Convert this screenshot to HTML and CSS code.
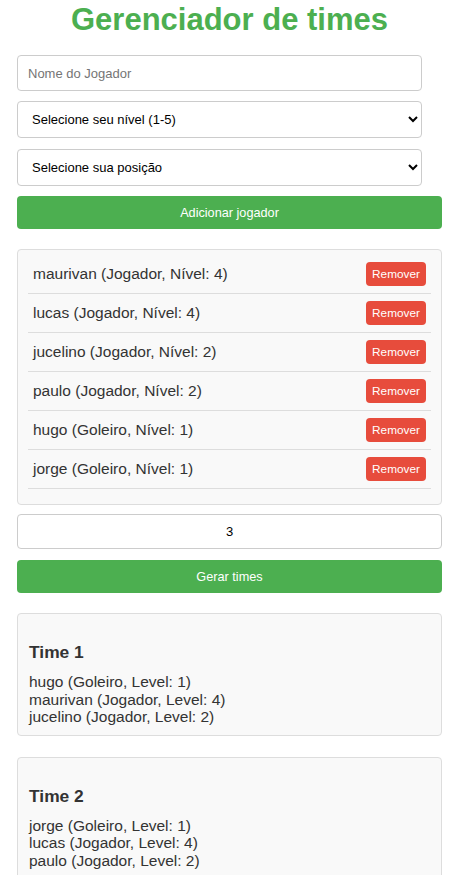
FILE: index.html
```html
<!DOCTYPE html>
<html lang="pt-BR">
<head>
<meta charset="utf-8">
<title>Gerenciador de times</title>
<link rel="stylesheet" href="styles.css">
</head>
<body>
<div class="container">
  <h1 class="title">Gerenciador de times</h1>
  <input class="field" type="text" placeholder="Nome do Jogador">
  <select class="field field-select">
    <option>Selecione seu nível (1-5)</option>
  </select>
  <select class="field field-select field-select2">
    <option>Selecione sua posição</option>
  </select>
  <button class="btn">Adicionar jogador</button>

  <ul class="players">
    <li class="player"><span>maurivan (Jogador, Nível: 4)</span><button class="remove">Remover</button></li>
    <li class="player"><span>lucas (Jogador, Nível: 4)</span><button class="remove">Remover</button></li>
    <li class="player"><span>jucelino (Jogador, Nível: 2)</span><button class="remove">Remover</button></li>
    <li class="player"><span>paulo (Jogador, Nível: 2)</span><button class="remove">Remover</button></li>
    <li class="player"><span>hugo (Goleiro, Nível: 1)</span><button class="remove">Remover</button></li>
    <li class="player"><span>jorge (Goleiro, Nível: 1)</span><button class="remove">Remover</button></li>
  </ul>

  <input class="count" type="number" value="3">
  <button class="btn btn-generate">Gerar times</button>

  <div class="team">
    <h3 class="team-title">Time 1</h3>
    <div class="team-line">hugo (Goleiro, Level: 1)</div>
    <div class="team-line">maurivan (Jogador, Level: 4)</div>
    <div class="team-line">jucelino (Jogador, Level: 2)</div>
  </div>

  <div class="team">
    <h3 class="team-title">Time 2</h3>
    <div class="team-line">jorge (Goleiro, Level: 1)</div>
    <div class="team-line">lucas (Jogador, Level: 4)</div>
    <div class="team-line">paulo (Jogador, Level: 2)</div>
  </div>
</div>
</body>
</html>
```
FILE: styles.css
```css
html, body {
  margin: 0;
  padding: 0;
  background: #ffffff;
}

body {
  font-family: "Liberation Sans", Arial, sans-serif;
  color: #333333;
}

.container {
  width: 425px;
  margin: 0 17px;
  display: flex;
  flex-direction: column;
  align-items: flex-start;
}

.title {
  align-self: stretch;
  text-align: center;
  color: #4caf50;
  font-size: 31px;
  font-weight: bold;
  margin: 2px 0 17px;
  line-height: normal;
}

.field {
  box-sizing: border-box;
  width: 405px;
  height: 36px;
  margin: 0 0 10px;
  padding: 0 10px;
  border: 1px solid #cccccc;
  border-radius: 4px;
  background: #ffffff;
  font-family: "Liberation Sans", Arial, sans-serif;
  font-size: 13px;
  color: #000000;
}

.field::placeholder {
  color: #757575;
}

.field-select {
  height: 37px;
  padding: 0 10px;
}

.field-select2 {
  margin-top: 1px;
}

.btn {
  box-sizing: border-box;
  align-self: stretch;
  height: 33px;
  margin: 0;
  border: none;
  border-radius: 4px;
  background: #4caf50;
  color: #ffffff;
  font-family: "Liberation Sans", Arial, sans-serif;
  font-size: 12.7px;
  cursor: pointer;
}

.players {
  box-sizing: border-box;
  align-self: stretch;
  list-style: none;
  margin: 20px 0 9px;
  padding: 5px 10px 15px;
  background: #f9f9f9;
  border: 1px solid #dddddd;
  border-radius: 4px;
}

.player {
  display: flex;
  justify-content: space-between;
  align-items: center;
  padding: 7px 5px;
  border-bottom: 1px solid #dddddd;
  font-size: 15.5px;
  color: #333333;
}

.remove {
  width: 60px;
  height: 24px;
  padding: 0;
  border: none;
  border-radius: 4px;
  background: #e74c3c;
  color: #ffffff;
  font-family: "Liberation Sans", Arial, sans-serif;
  font-size: 11.8px;
}

.count {
  box-sizing: border-box;
  align-self: stretch;
  height: 35px;
  margin: 0 0 11px;
  padding: 0 10px;
  border: 1px solid #cccccc;
  border-radius: 4px;
  text-align: center;
  font-family: "Liberation Sans", Arial, sans-serif;
  font-size: 13px;
  color: #000000;
  -moz-appearance: textfield;
}

.count::-webkit-inner-spin-button,
.count::-webkit-outer-spin-button {
  -webkit-appearance: none;
  margin: 0;
}

.btn-generate {
  height: 33px;
}

.team {
  box-sizing: border-box;
  align-self: stretch;
  margin: 20px 0 0;
  padding: 10px 11px 9px;
  background: #f9f9f9;
  border: 1px solid #dddddd;
  border-radius: 4px;
}

.team + .team {
  margin-top: 21px;
}

.team-title {
  margin: 18px 0 10px;
  font-size: 17.4px;
  font-weight: bold;
  color: #333333;
}

.team-line {
  font-size: 15.5px;
  line-height: 17.5px;
  color: #333333;
}
```
